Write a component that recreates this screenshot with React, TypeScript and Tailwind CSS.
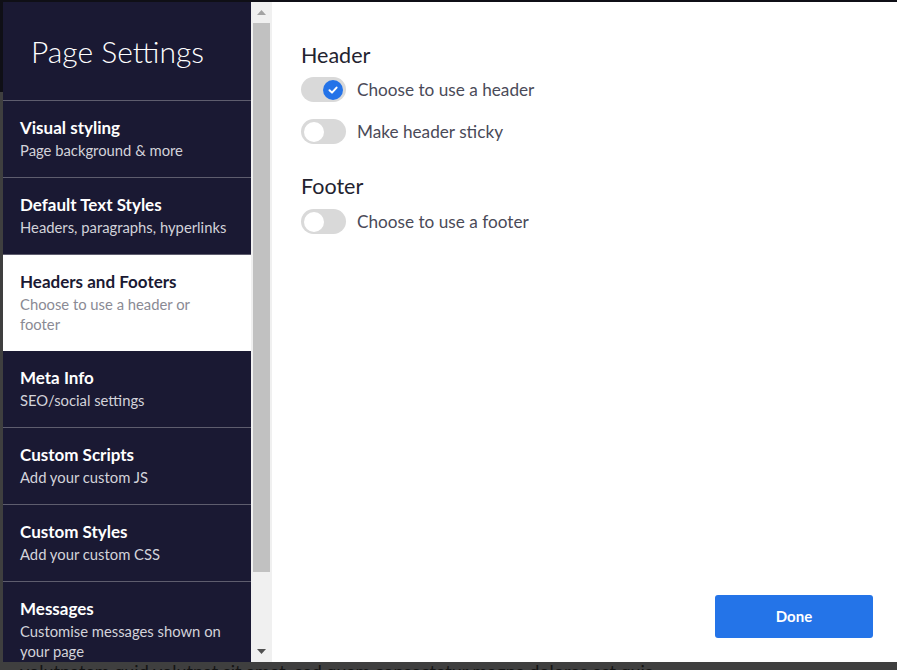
import React from "react";

type Item = { title: string; sub: string; active?: boolean; subW: string };

const items: Item[] = [
  { title: "Visual styling", sub: "Page background & more", subW: "max-w-[220px]" },
  { title: "Default Text Styles", sub: "Headers, paragraphs, hyperlinks", subW: "max-w-[225px]" },
  { title: "Headers and Footers", sub: "Choose to use a header or footer", active: true, subW: "max-w-[190px]" },
  { title: "Meta Info", sub: "SEO/social settings", subW: "max-w-[220px]" },
  { title: "Custom Scripts", sub: "Add your custom JS", subW: "max-w-[220px]" },
  { title: "Custom Styles", sub: "Add your custom CSS", subW: "max-w-[220px]" },
  { title: "Messages", sub: "Customise messages shown on your page", subW: "max-w-[215px]" },
];

function Toggle({ on }: { on?: boolean }) {
  return (
    <div className="relative w-[45px] h-[25px] rounded-full bg-[#d9d9d9] shrink-0">
      {on ? (
        <div className="absolute right-[3px] top-[2.5px] w-[20px] h-[20px] rounded-full bg-[#2473e8] flex items-center justify-center">
          <svg width="12" height="12" viewBox="0 0 12 12">
            <path d="M2.5 6.2 L5 8.6 L9.6 3.6" fill="none" stroke="white" strokeWidth="2" strokeLinecap="round" strokeLinejoin="round" />
          </svg>
        </div>
      ) : (
        <div className="absolute left-[3px] top-[2.5px] w-[20px] h-[20px] rounded-full bg-white" />
      )}
    </div>
  );
}

export default function App() {
  return (
    <div
      className="relative w-[897px] h-[670px] overflow-hidden bg-[#3f3f3f]"
      style={{ fontFamily: "Lato, 'Noto Sans', sans-serif" }}
    >
      {/* backdrop page */}
      <div className="flex flex-col h-full">
        <div className="h-[92px] bg-[#0f0f16]" />
        <div className="flex-1 flex flex-col justify-end text-[#141414] text-[18px] leading-[22px] whitespace-nowrap translate-y-[12px] pl-[20px]">
          volutpatem quid volutpat sit amet, sed quam consectetur magna dolores est quis
        </div>
      </div>

      {/* modal */}
      <div className="absolute left-[3px] top-[2px] w-[894px] h-[660px] flex bg-white">
        {/* sidebar */}
        <div className="w-[248px] h-full bg-[#1a1933] flex flex-col overflow-hidden">
          <div className="h-[99px] shrink-0 flex items-center pl-[28px] border-b border-[#5e5d6e]">
            <div className="text-white text-[30px] font-light leading-none">Page Settings</div>
          </div>
          {items.map((it) => (
            <div
              key={it.title}
              className={
                "shrink-0 pl-[17px] pr-[10px] pt-[15px] border-b " +
                (it.active ? "pb-[16px] bg-white border-white" : "pb-[17px] border-[#5e5d6e]")
              }
            >
              <div
                className={
                  "text-[17px] leading-6 font-bold whitespace-nowrap " +
                  (it.active ? "text-[#1a1933]" : "text-white")
                }
              >
                {it.title}
              </div>
              <div
                className={
                  "text-[14.8px] leading-5 " +
                  it.subW +
                  " " +
                  (it.active ? "text-[#8a8a94]" : "text-[#d3d3da]")
                }
              >
                {it.sub}
              </div>
            </div>
          ))}
        </div>

        {/* scrollbar */}
        <div className="w-[21px] h-full bg-[#f0f0f0] flex flex-col items-center">
          <div className="h-[21px] w-full flex items-center justify-center">
            <svg width="9" height="5" viewBox="0 0 9 5">
              <path d="M0 5 L4.5 0 L9 5 Z" fill="#a3a3a3" />
            </svg>
          </div>
          <div className="w-[17px] h-[549px] bg-[#c1c1c1]" />
          <div className="flex-1" />
          <div className="h-[21px] w-full flex items-center justify-center">
            <svg width="9" height="5" viewBox="0 0 9 5">
              <path d="M0 0 L9 0 L4.5 5 Z" fill="#505050" />
            </svg>
          </div>
        </div>

        {/* content */}
        <div className="flex-1 flex flex-col pl-[29px] pr-[24px]">
          <div className="pt-[40px] text-[21.5px] leading-[26px] text-[#23232f]">Header</div>
          <div className="flex items-center gap-[11px] mt-[9px]">
            <Toggle on />
            <span className="text-[17.2px] leading-[25px] text-[#4a4a58]">Choose to use a header</span>
          </div>
          <div className="flex items-center gap-[11px] mt-[17px]">
            <Toggle />
            <span className="text-[17.2px] leading-[25px] text-[#4a4a58]">Make header sticky</span>
          </div>
          <div className="mt-[29px] text-[21.5px] leading-[26px] text-[#23232f]">Footer</div>
          <div className="flex items-center gap-[11px] mt-[10px]">
            <Toggle />
            <span className="text-[17.2px] leading-[25px] text-[#4a4a58]">Choose to use a footer</span>
          </div>
          <div className="flex-1" />
          <div className="flex justify-end pb-[24px]">
            <button className="w-[158px] h-[43px] rounded-[3px] bg-[#2474e8] text-white font-bold text-[15px]">
              Done
            </button>
          </div>
        </div>
      </div>
    </div>
  );
}
